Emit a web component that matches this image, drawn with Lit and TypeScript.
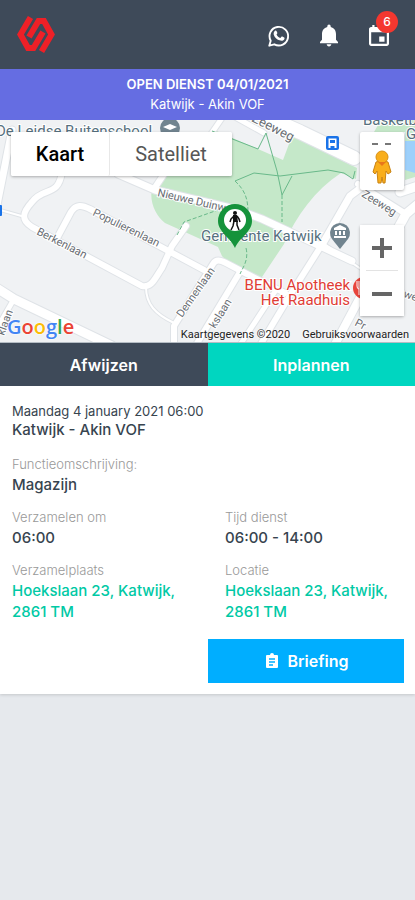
import { LitElement, html, svg, css } from "lit";
import { customElement, state } from "lit/decorators.js";

@customElement("top-bar")
class TopBar extends LitElement {
  static styles = css`
    :host { display: block; }
    header {
      display: flex;
      align-items: center;
      justify-content: space-between;
      height: 69px;
      padding: 0 24px 0 16px;
      box-sizing: border-box;
      background: #3e4a59;
    }
    svg { display: block; }
    nav { display: flex; gap: 26px; }
    button {
      position: relative;
      width: 24px;
      height: 24px;
      margin-top: 2px;
      padding: 0;
      border: 0;
      background: none;
      color: #fff;
      cursor: pointer;
    }
    .badge {
      position: absolute;
      left: 9px;
      top: -13px;
      width: 22px;
      height: 22px;
      border-radius: 50%;
      background: #f4372f;
      font: 500 12px/22px Inter, sans-serif;
      text-align: center;
    }
  `;
  render() {
    return html`
      <header>
        <svg class="logo" width="40" height="38" viewBox="0 0 40 38" role="img" aria-label="Logo" fill="none" stroke="#ee2027" stroke-width="6">
          <path d="M14.500 1.500 4.500 18.500 12 32H17.500L27 16" />
          <path d="M25.500 35.500 35.500 18.500 28 5H22.500L13 21" />
        </svg>
        <nav>
          <button aria-label="WhatsApp">
            <svg width="24" height="24" viewBox="0 0 24 24">
              <path d="M2.300 21.700 3.700 16.700A9.300 9.300 0 1 1 7.300 20.300Z" fill="none" stroke="currentColor" stroke-width="1.900" stroke-linejoin="round" />
              <path d="M8 6.800c.5-.5 1.200-.4 1.500.2l.8 1.800c.2.500-.1.900-.8 1.600.9 1.700 2.100 2.800 3.900 3.500l1-1.200c.3-.4.700-.3 1-.1l1.700.9c.6.3.5.700.3 1.400-.5 1.500-2.300 2.200-4 1.700-3.700-1-6-3.300-6.700-6.200-.2-1.400.3-2.700 1.300-3.600Z" fill="currentColor" />
            </svg>
          </button>
          <button aria-label="Meldingen">
            <svg width="24" height="24" viewBox="0 0 24 24" fill="currentColor">
              <path d="M12 22.500c1.300 0 2.300-1 2.300-2.200H9.700c0 1.200 1 2.200 2.300 2.200Zm7-6.700v-5.600c0-3.500-1.900-6.400-5.300-7.200v-.800a1.700 1.700 0 0 0-3.400 0V3C6.900 3.800 5 6.700 5 10.200v5.600L3 18v1.200h18V18Z" />
            </svg>
          </button>
          <button aria-label="Agenda, 6 nieuwe">
            <svg width="24" height="24" viewBox="0 0 24 24" fill="currentColor">
              <path d="M17.500 12.500h-5.300v5.300h5.300ZM16.500 1v2H7.500V1H5.300v2H4.200C2.900 3 2 4 2 5.200v14.600C2 21 3 22 4.200 22h15.600c1.200 0 2.200-1 2.200-2.200V5.200C22 4 21 3 19.800 3h-1.100V1Zm3.300 18.800H4.200V8.300h15.600Z" />
            </svg>
            <span class="badge">6</span>
          </button>
        </nav>
      </header>
    `;
  }
}

@customElement("shift-map")
class ShiftMap extends LitElement {
  @state() private layer = "Kaart";

  static styles = css`
    :host {
      display: block;
      position: relative;
      height: 222px;
      overflow: hidden;
      background: #f0f2f4;
      font-family: Roboto, sans-serif;
    }
    .canvas { display: block; width: 100%; height: 100%; }
    .edge { fill: none; stroke: #dfe3e7; stroke-linecap: round; stroke-linejoin: round; }
    .road { fill: none; stroke: #fff; stroke-linecap: round; stroke-linejoin: round; }
    .path { fill: none; stroke: #69b98a; stroke-width: 1; }
    .dash { stroke-dasharray: 4 2; }
    .street { font-size: 11px; fill: #686d73; stroke: #fff; stroke-width: 2px; paint-order: stroke; }
    .avenue { font-size: 13px; }
    .place { font-size: 15px; fill: #56707e; stroke: #fff; stroke-width: 2px; paint-order: stroke; }
    .pharmacy { font-size: 15px; fill: #df3c35; stroke: #fff; stroke-width: 2px; paint-order: stroke; text-anchor: end; }
    button {
      border: 0;
      padding: 0;
      background: #fff;
      color: #565656;
      font-family: inherit;
      cursor: pointer;
    }
    .layers, .pegman, .zoom {
      position: absolute;
      display: flex;
      background: #fff;
      border-radius: 2px;
      box-shadow: 0 1px 3px #0000004d;
    }
    .layers { left: 11px; top: 12px; height: 44px; }
    .layers button { width: 122px; font-size: 20px; border-radius: 2px; }
    .layers button:first-child { width: 99px; border-right: 1px solid #e8e8e8; }
    .layers .on { color: #000; font-weight: 500; }
    .pegman {
      right: 11px;
      top: 12px;
      width: 44px;
      height: 58px;
      align-items: center;
      justify-content: center;
    }
    .zoom { right: 11px; top: 105px; width: 44px; flex-direction: column; align-items: center; }
    .zoom button { width: 44px; height: 45px; display: grid; place-items: center; }
    .zoom hr { width: 32px; height: 1px; margin: 0; border: 0; background: #e3e3e3; }
    .google {
      position: absolute;
      left: 7px;
      bottom: 2px;
      font: 600 20px/26px "Open Sans", sans-serif;
      text-decoration: none;
      text-shadow: 0 0 2px #fff, 0 0 2px #fff;
    }
    .blue { color: #4285f4; }
    .red { color: #ea4335; }
    .yellow { color: #fbbc05; }
    .green { color: #34a853; }
    .legal {
      position: absolute;
      right: 6px;
      bottom: 0;
      display: flex;
      gap: 12px;
      font-size: 11px;
      line-height: 14px;
      color: #222;
      text-shadow: 0 0 2px #fff;
    }
    .legal a { color: inherit; text-decoration: none; }
  `;

  private roads: [string, number][] = [
    ["M-5 215 12 130", 7],
    ["M62 172C58 198 44 186 32 202 22 213 21 220 32 227L142 286C152 288 155 278 162 268L172 246 186 226", 6],
    ["M56 240 71 212C76 204 82 205 90 209L204 270", 6],
    ["M118 174 155 190 235 209 262 219 303 238 352 261", 7],
    ["M154 189 164 174", 6],
    ["M-5 287 14 299 62 322 112 346", 9],
    ["M14 299-4 330", 5],
    ["M146 287C146 304 155 314 174 323", 2],
    ["M174 345V326L213 264C216 259 220 260 226 263L247 274 285 293", 6],
    ["M240 272 196 345", 6],
    ["M276 290 240 345", 5],
    ["M323 243 292 292 259 347", 6],
    ["M323 243 364 271 420 300", 2],
    ["M364 290 332 350", 8],
    ["M240 105 300 132 354 158", 14],
    ["M366 184 350 196 323 243", 7],
    ["M358 184 406 214", 6],
    ["M400 192 418 186M406 214 418 204M406 214 396 232", 9],
    ["M226 112 264 133", 5],
    ["M222 118 200 150", 5],
    ["M0 210 25 217", 2],
  ];

  render() {
    return html`
      <svg class="canvas" viewBox="0 120 415 222" preserveAspectRatio="xMidYMid slice" role="img" aria-label="Kaart van Katwijk">
        <path fill="#c5e8c9" d="M165 172 152 188C149 202 156 216 165 223L218 247 222 256 240 276 262 277 284 244C296 216 315 190 341 173L356 179 357 168 292 136 283 160 212 129Z" />
        <path fill="#c5e8c9" d="M381 120 374 132H405V180L415 177V120Z" />
        <path fill="#9dd0fb" d="M405 141H415V173L405 170Z" />
        ${this.roads.map(([d, w]) => svg`<path class="edge" d=${d} stroke-width=${w + 2} />`)}
        ${this.roads.map(([d, w]) => svg`<path class="road" d=${d} stroke-width=${w} />`)}
        <path class="path" d="M212 131 258 149 266 133 277 171 282 195 292 176M235 181 254 173 280 176 328 170 344 173 353 179 355 171" />
        <path class="path dash" d="M235 181C247 192 248 202 248 214M282 195V222M177 235 184 222 232 205M246 248C249 260 243 267 240 274" />
        <text class="place" x="-4" y="136">De Leidse Buitenschool</text>
        <text class="place" x="363" y="125">Basketbal</text>
        <text class="place" x="406" y="139">G</text>
        <text class="street avenue" transform="translate(251 121) rotate(27)">Zeeweg</text>
        <text class="street" transform="translate(157 196) rotate(13)">Nieuwe Duinweg</text>
        <text class="street" transform="translate(92 215) rotate(26)">Populierenlaan</text>
        <text class="street" transform="translate(36 234) rotate(27)">Berkenlaan</text>
        <text class="street" transform="translate(182 318) rotate(-55)">Dennenlaan</text>
        <text class="street" transform="translate(215 329) rotate(-58)">kslaan</text>
        <text class="street" transform="translate(361 196) rotate(32)">Zeeweg</text>
        <text class="street" transform="translate(4 336) rotate(-70)">klaan</text>
        <text class="street" transform="translate(354 325) rotate(28)">Pr</text>
        <text class="street" transform="translate(403 297) rotate(18)">we</text>
        <text class="place" x="201" y="241">Gemeente Katwijk</text>
        <text class="pharmacy" x="350" y="290">BENU Apotheek</text>
        <text class="pharmacy" x="350" y="305">Het Raadhuis</text>
        <circle cx="364" cy="288" r="11" fill="#e8453c" />
        <path d="M359 281V289M357 281V286Q357 289 359 289V295" fill="none" stroke="#fff" stroke-width="1" />
        <path d="M340 249 332 239A10 10 0 1 1 348 239Z" fill="#71848f" />
        <path d="M334 228 340 225 346 228V230H334ZM335 231H337V235H335ZM339 231H341V235H339ZM343 231H345V235H343ZM334 236H346V238H334Z" fill="#fff" />
        <circle cx="170" cy="128" r="10" fill="#71848f" />
        <path d="M163 127 170 124 177 127 170 130Z" fill="#fff" />
        <rect x="326" y="136" width="13" height="14" rx="2" fill="#1a73e8" />
        <path d="M328.500 138.500H336.500V146H328.500ZM328.500 146H330.500V148H328.500ZM334.500 146H336.500V148H334.500Z" fill="#fff" />
        <path d="M330 140H335V143H330Z" fill="#1a73e8" />
        <rect x="-8" y="205" width="10" height="11" rx="1" fill="#1a73e8" />
        <path d="M235 248C231 238 218 232 218 221A17 17 0 0 1 252 221C252 232 239 238 235 248Z" fill="#15933b" />
        <circle cx="235" cy="220" r="11" fill="#fff" />
        <circle cx="235" cy="213" r="2" fill="#111" />
        <path d="M233 215H237L238 222H233Z" fill="#111" />
        <path d="M234 221 233 226 231 230M237 221 237 225 239 230M234 216 231 219 230 222M237 216 239 219 240 222" fill="none" stroke="#111" stroke-width="1.500" stroke-linejoin="round" />
      </svg>
      <div class="layers">
        ${["Kaart", "Satelliet"].map(
          (name) => html`<button class=${this.layer === name ? "on" : ""} @click=${() => (this.layer = name)}>${name}</button>`
        )}
      </div>
      <button class="pegman" aria-label="Street View">
        <svg width="24" height="48" viewBox="0 0 24 48">
          <path d="M2 7H8M15 7H21" stroke="#777" stroke-width="2" />
          <path d="M6 25Q12 22 18 25L21 35 18 37 16 34 15 46H13L12 40 11 46H8L7 34 5 37 3 35Z" fill="#f9ae1b" stroke="#c98313" stroke-width="1" />
          <circle cx="12" cy="20" r="6" fill="#f9ae1b" stroke="#d99013" stroke-width="1" />
          <path d="M8 25 12 29 16 25Z" fill="#e8761b" />
        </svg>
      </button>
      <div class="zoom">
        <button aria-label="Inzoomen">
          <svg width="20" height="20" viewBox="0 0 20 20"><path d="M10 0V20M0 10H20" stroke="#666" stroke-width="4" /></svg>
        </button>
        <hr />
        <button aria-label="Uitzoomen">
          <svg width="20" height="20" viewBox="0 0 20 20"><path d="M0 10H20" stroke="#666" stroke-width="4" /></svg>
        </button>
      </div>
      <a class="google" href="#google" aria-label="Google"><span class="blue">G</span><span class="red">o</span><span class="yellow">o</span><span class="blue">g</span><span class="green">l</span><span class="red">e</span></a>
      <div class="legal"><span>Kaartgegevens ©2020</span><a href="#voorwaarden">Gebruiksvoorwaarden</a></div>
    `;
  }
}

@customElement("app-root")
class AppRoot extends LitElement {
  static styles = css`
    :host {
      display: block;
      min-height: 100vh;
      background: #e6e9ed;
      color: #37444f;
      font-family: Inter, sans-serif;
    }
    .banner {
      padding: 5px 0 6px;
      background: #656de2;
      color: #fff;
      text-align: center;
      font-size: 13px;
      line-height: 20px;
    }
    .banner h1 { margin: 0; font-size: 13px; font-weight: 600; }
    .banner p { margin: 0; }
    .actions { display: grid; grid-template-columns: 1fr 1fr; border-top: 1px solid #b5bdc4; }
    button {
      height: 44px;
      padding: 0;
      border: 0;
      color: #fff;
      font: 600 16px/20px Inter, sans-serif;
      cursor: pointer;
    }
    .actions button { height: 43px; }
    .reject { background: #3e4a59; }
    .accept { background: #00d6c0; }
    .card { background: #fff; padding: 16px 11px 11px 12px; box-shadow: 0 1px 3px #00000026; }
    .date { margin: 0; font-size: 13px; line-height: 18px; }
    .client { margin: 0; font-size: 15px; font-weight: 500; line-height: 20px; }
    dl { display: grid; grid-template-columns: 1fr 1fr; column-gap: 34px; row-gap: 12px; margin: 14px 0 17px; }
    .wide { grid-column: 1 / -1; }
    dt { font-size: 13px; line-height: 20px; font-weight: 300; color: #999; }
    dd { margin: 0; font-size: 15px; font-weight: 500; line-height: 21px; }
    dd a { color: #00c9a5; text-decoration: none; }
    .footer { display: grid; grid-template-columns: 1fr 1fr; }
    .briefing {
      grid-column: 2;
      display: flex;
      align-items: center;
      justify-content: center;
      gap: 8px;
      background: #00aeff;
    }
  `;
  render() {
    const address = html`<a href="#route">Hoekslaan 23, Katwijk, 2861 TM</a>`;
    return html`
      <top-bar></top-bar>
      <section class="banner">
        <h1>OPEN DIENST 04/01/2021</h1>
        <p>Katwijk - Akin VOF</p>
      </section>
      <shift-map></shift-map>
      <div class="actions">
        <button class="reject">Afwijzen</button>
        <button class="accept">Inplannen</button>
      </div>
      <main class="card">
        <p class="date">Maandag 4 january 2021 06:00</p>
        <p class="client">Katwijk - Akin VOF</p>
        <dl>
          <div class="wide"><dt>Functieomschrijving:</dt><dd>Magazijn</dd></div>
          <div><dt>Verzamelen om</dt><dd>06:00</dd></div>
          <div><dt>Tijd dienst</dt><dd>06:00 - 14:00</dd></div>
          <div><dt>Verzamelplaats</dt><dd>${address}</dd></div>
          <div><dt>Locatie</dt><dd>${address}</dd></div>
        </dl>
        <div class="footer">
          <button class="briefing">
            <svg width="16" height="16" viewBox="0 0 16 16">
              <path d="M3 2H6A2 2 0 0 1 10 2H13Q14 2 14 3V14Q14 15 13 15H3Q2 15 2 14V3Q2 2 3 2Z" fill="#fff" />
              <path d="M5 6H11M5 9H11M5 12H9" stroke="#00aeff" stroke-width="1.500" />
            </svg>
            Briefing
          </button>
        </div>
      </main>
    `;
  }
}
